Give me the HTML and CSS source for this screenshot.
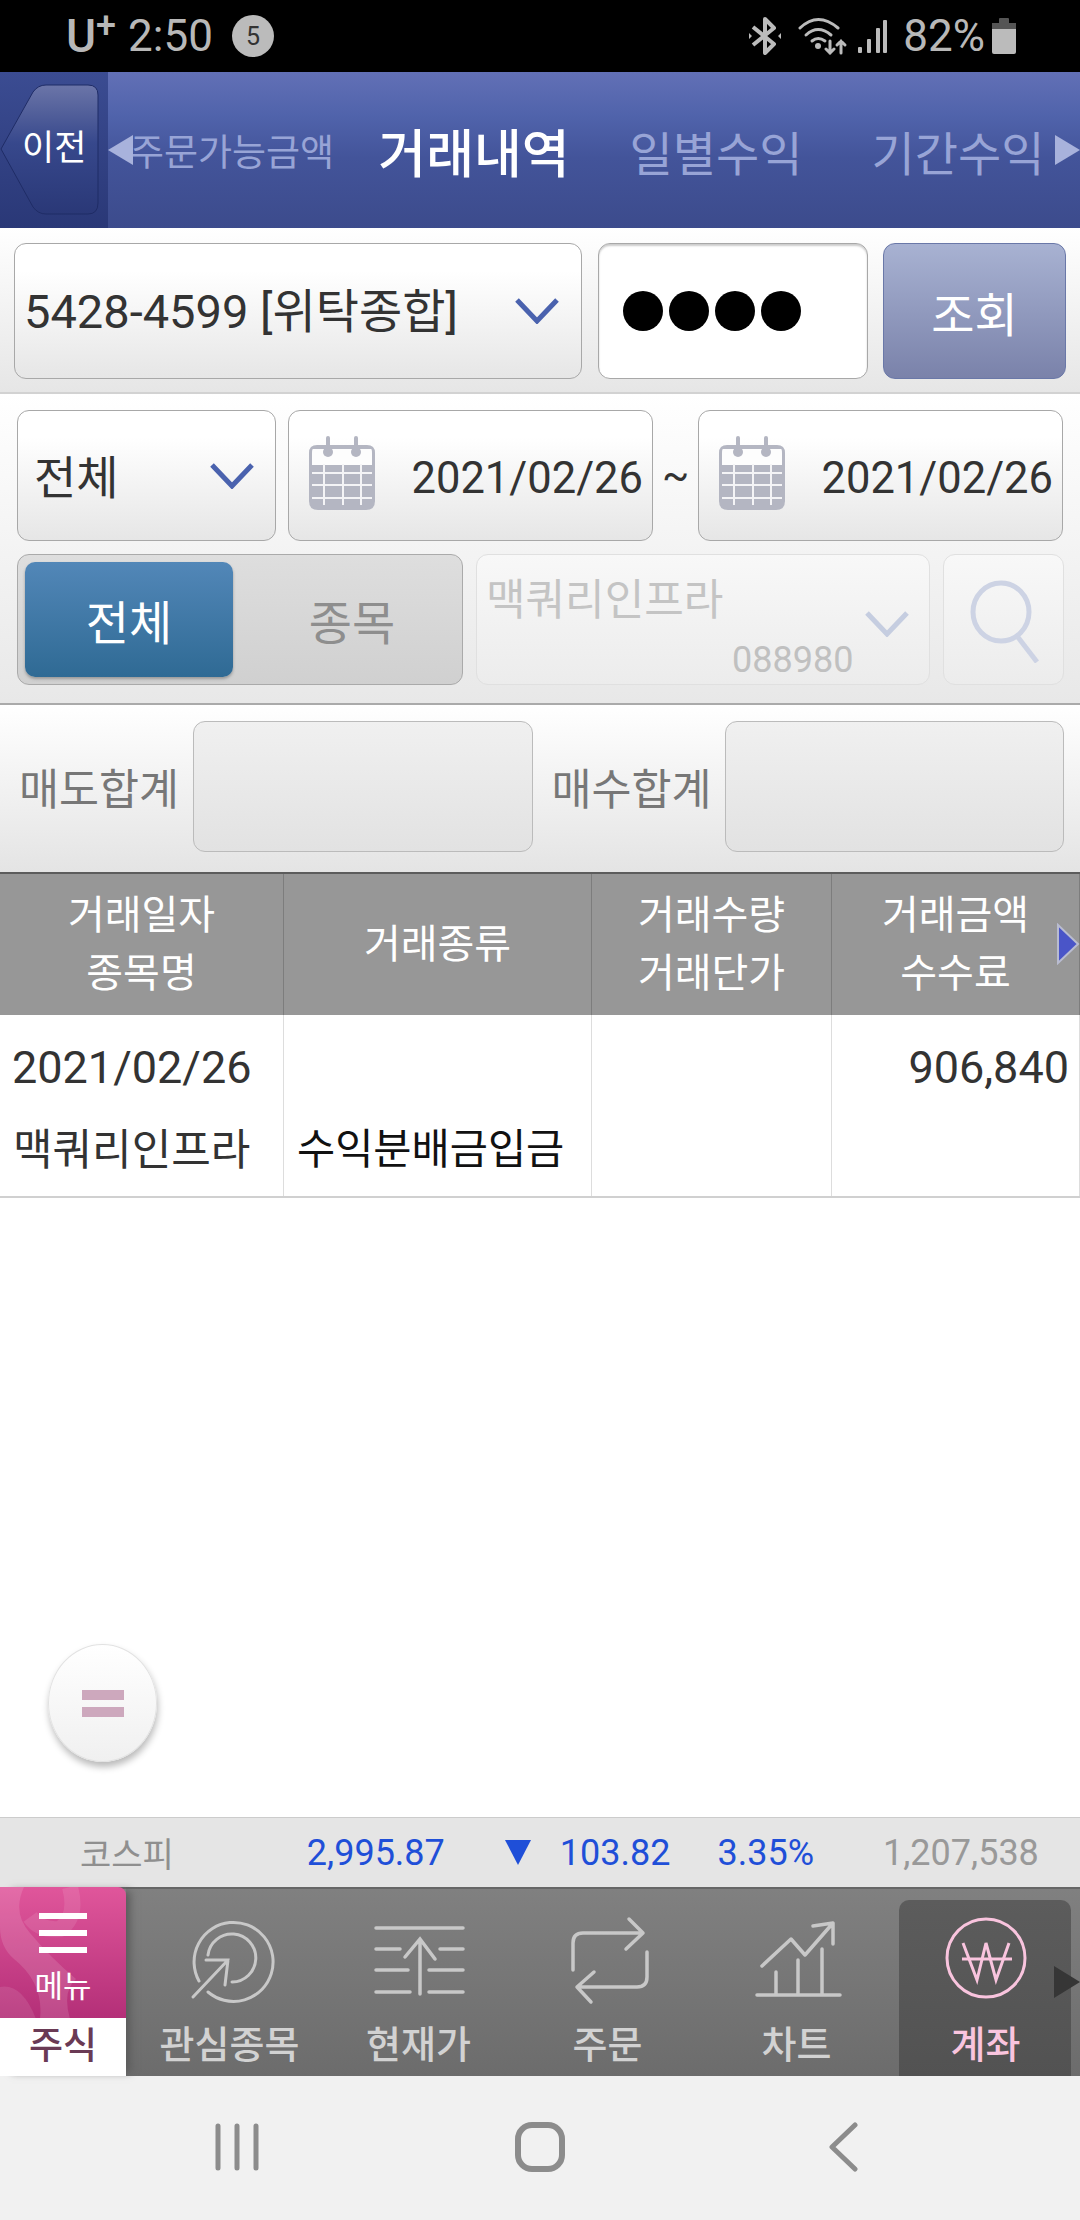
FILE: index.html
```html
<!DOCTYPE html>
<html lang="ko">
  <head>
    <meta charset="UTF-8" />
    <meta name="viewport" content="width=device-width, initial-scale=1.0" />
    <title>거래내역</title>
    <link rel="stylesheet" href="styles.css">
  </head>
  <body>
    <!-- status bar -->
    <div id="statusBar">
      <div class="statusLeft">
        <span class="carrier">U<sup>+</sup></span>
        <span class="clock">2:50</span>
        <span class="badge">5</span>
      </div>
      <div class="statusRight">
        <svg class="btIcon" width="34" height="38" viewBox="0 0 34 38"><path d="M5 10 L26 27 L17 36 V2 L26 11 L5 28" fill="none" stroke="#bbb" stroke-width="4" stroke-linejoin="round"/><path d="M1 16 L4 19 L1 22 Z M33 16 L30 19 L33 22 Z" fill="#bbb"/></svg>
        <svg class="wifiIcon" width="50" height="38" viewBox="0 0 50 38"><g fill="none" stroke="#bbb" stroke-width="3" stroke-linecap="round"><path d="M2 11 Q20 -6 40 11"/><path d="M8 18 Q20 7 33 18"/><path d="M14 24 Q20 19 27 24"/><path d="M32 24 V36 M28 32 L32 36 L36 32"/><path d="M43 36 V24 M39 28 L43 24 L47 28"/></g><circle cx="20" cy="29" r="3" fill="#bbb"/></svg>
        <svg class="signalIcon" width="32" height="36" viewBox="0 0 32 36"><g fill="#bbb"><rect x="1" y="29" width="4" height="6" rx="1"/><rect x="10" y="21" width="4" height="14" rx="1"/><rect x="19" y="10" width="4" height="25" rx="1"/><rect x="26" y="2" width="4" height="33" rx="1"/></g></svg>
        <span class="battText">82%</span>
        <div class="battery"><div class="battCap"></div><div class="battTop"></div><div class="battBody"></div></div>
      </div>
    </div>

    <!-- top tabs -->
    <div id="topHeader">
      <div class="backArea">
        <svg width="108" height="156" viewBox="0 0 108 156">
          <defs>
            <linearGradient id="backFill" x1="0" y1="0" x2="0" y2="1">
              <stop offset="0" stop-color="#6b75a8"/>
              <stop offset="0.45" stop-color="#37488c"/>
              <stop offset="1" stop-color="#2a3877"/>
            </linearGradient>
          </defs>
          <path d="M1 77 L33 20 Q38 13 46 13 H88 Q98 13 98 23 V131 Q98 142 88 142 H46 Q38 142 33 135 Z" fill="url(#backFill)" stroke="#1f2c66" stroke-width="1"/>
        </svg>
        <span class="backLabel">이전</span>
      </div>
      <div class="tabs">
        <div class="tab small">주문가능금액</div>
        <div class="tab active">거래내역</div>
        <div class="tab">일별수익</div>
        <div class="tab">기간수익</div>
        <div class="tabArrow left"></div>
        <div class="tabArrow right"></div>
      </div>
    </div>

    <!-- account -->
    <div id="accountRow">
      <div class="field accountSelect">
        <span class="accountText">5428-4599 [위탁종합]</span>
        <svg class="chevron" width="44" height="26" viewBox="0 0 44 26"><path d="M2 2 L22 23 L42 2" fill="none" stroke="#4a62ae" stroke-width="5"/></svg>
      </div>
      <div class="passwordBox"><i></i><i></i><i></i><i></i></div>
      <button class="queryBtn">조회</button>
    </div>

    <!-- filters -->
    <div id="filterPanel">
      <div class="filterRow">
        <div class="field typeSelect">
          <span>전체</span>
          <svg class="chevron" width="44" height="26" viewBox="0 0 44 26"><path d="M2 2 L22 23 L42 2" fill="none" stroke="#4a62ae" stroke-width="5"/></svg>
        </div>
        <div class="field dateField">
          <svg class="calendar" width="68" height="76" viewBox="0 0 68 76">
            <path d="M9 10 H59 Q67 10 67 18 V66 Q67 75 58 75 H10 Q1 75 1 66 V18 Q1 10 9 10 Z" fill="#b4b6c2"/>
            <path d="M5 14 H63 Q64 14 64 18 V30 H4 V18 Q4 14 5 14 Z" fill="#fdfdfd"/>
            <g fill="#b4b6c2"><circle cx="20" cy="17" r="5"/><circle cx="48" cy="17" r="5"/><rect x="18" y="1" width="4" height="16" rx="2"/><rect x="46" y="1" width="4" height="16" rx="2"/></g>
            <g stroke="#f4f4f6" stroke-width="2"><path d="M4 38 H64 M4 50 H64 M4 63 H64 M16 29 V70 M35 29 V70 M53 29 V70"/></g>
          </svg>
          <span class="dateText">2021/02/26</span>
        </div>
        <div class="tilde">~</div>
        <div class="field dateField">
          <svg class="calendar" width="68" height="76" viewBox="0 0 68 76">
            <path d="M9 10 H59 Q67 10 67 18 V66 Q67 75 58 75 H10 Q1 75 1 66 V18 Q1 10 9 10 Z" fill="#b4b6c2"/>
            <path d="M5 14 H63 Q64 14 64 18 V30 H4 V18 Q4 14 5 14 Z" fill="#fdfdfd"/>
            <g fill="#b4b6c2"><circle cx="20" cy="17" r="5"/><circle cx="48" cy="17" r="5"/><rect x="18" y="1" width="4" height="16" rx="2"/><rect x="46" y="1" width="4" height="16" rx="2"/></g>
            <g stroke="#f4f4f6" stroke-width="2"><path d="M4 38 H64 M4 50 H64 M4 63 H64 M16 29 V70 M35 29 V70 M53 29 V70"/></g>
          </svg>
          <span class="dateText">2021/02/26</span>
        </div>
      </div>
      <div class="filterRow">
        <div class="toggle">
          <div class="toggleOn">전체</div>
          <div class="toggleOff">종목</div>
        </div>
        <div class="stockInput">
          <span class="stockName">맥쿼리인프라</span>
          <span class="stockCode">088980</span>
          <svg class="stockChevron" width="44" height="26" viewBox="0 0 44 26"><path d="M2 2 L22 23 L42 2" fill="none" stroke="#c5cde0" stroke-width="5"/></svg>
        </div>
        <div class="searchBtn">
          <svg width="70" height="84" viewBox="0 0 70 84"><ellipse cx="32" cy="33" rx="28" ry="29" fill="none" stroke="#cdd3e4" stroke-width="5"/><path d="M48 57 L68 83" stroke="#cdd3e4" stroke-width="5"/></svg>
        </div>
      </div>
    </div>

    <!-- totals -->
    <div id="sumRow">
      <span class="sumLabel">매도합계</span>
      <div class="sumBox"></div>
      <span class="sumLabel second">매수합계</span>
      <div class="sumBox"></div>
    </div>

    <!-- table -->
    <div id="tableHead" class="gridCols">
      <div class="headCell">거래일자<br>종목명</div>
      <div class="headCell">거래종류</div>
      <div class="headCell">거래수량<br>거래단가</div>
      <div class="headCell">거래금액<br>수수료</div>
      <svg class="headArrow" width="24" height="42" viewBox="0 0 24 42"><path d="M2 2 L22 21 L2 40 Z" fill="#4a55c8" stroke="#b9bcd0" stroke-width="2"/></svg>
    </div>
    <div id="tableRow" class="gridCols">
      <div class="bodyCell"><div class="line num">2021/02/26</div><div class="line name">맥쿼리인프라</div></div>
      <div class="bodyCell"><div class="line"></div><div class="line kind">수익분배금입금</div></div>
      <div class="bodyCell"></div>
      <div class="bodyCell"><div class="line num right">906,840</div></div>
    </div>

    <div id="emptyArea">
      <div class="fab"><i></i><i></i></div>
    </div>

    <!-- index ticker -->
    <div id="ticker">
      <span class="tkName">코스피</span>
      <span class="tkIndex">2,995.87</span>
      <svg class="tkDown" width="28" height="27" viewBox="0 0 28 27"><path d="M1 1 H27 L14 26 Z" fill="#1f4fd8"/></svg>
      <span class="tkDiff">103.82</span>
      <span class="tkPct">3.35%</span>
      <span class="tkVol">1,207,538</span>
    </div>

    <!-- app menu -->
    <div id="bottomMenu">
      <div class="menuTile">
        <div class="menuPink">
          <svg class="swirl" width="126" height="132" viewBox="0 0 126 132"><path d="M0 0 H24 Q12 26 30 46 Q50 70 76 92 Q62 104 70 132 H40 Q44 96 14 72 Q0 60 0 40 Z" fill="#fff" opacity="0.13"/><path d="M0 100 Q22 96 36 132 H0 Z" fill="#fff" opacity="0.1"/><path d="M70 0 Q78 30 60 42 Q40 44 30 30" fill="none" stroke="#fff" stroke-width="16" opacity="0.1"/></svg>
          <div class="burger"><i></i><i></i><i></i></div>
          <span class="menuText">메뉴</span>
        </div>
        <div class="menuWhite">주식</div>
      </div>
      <div class="navItem">
        <svg width="120" height="100" viewBox="0 0 120 100"><g fill="none" stroke="#c8c8c8" stroke-width="3" stroke-linecap="round"><path d="M38 82 A39.5 39.5 0 1 0 29 71"/><path d="M62 72 A24 24 0 1 0 38 45"/><path d="M23 87 L58 50 M36 50 H58 L55 75"/></g></svg>
        <span>관심종목</span>
      </div>
      <div class="navItem">
        <svg width="120" height="100" viewBox="0 0 120 100"><g fill="none" stroke="#c8c8c8" stroke-width="3.5" stroke-linecap="round"><path d="M17 18 H104 M17 39 H41 M81 39 H104 M17 60 H49 M70 60 H104 M17 82 H51 M70 82 H104"/><path d="M61 84 V29 M46 47 L61 29 L76 49"/></g></svg>
        <span>현재가</span>
      </div>
      <div class="navItem">
        <svg width="120" height="100" viewBox="0 0 120 100"><g fill="none" stroke="#c8c8c8" stroke-width="3.5" stroke-linecap="round" stroke-linejoin="round"><path d="M25 60 V33 Q25 23 35 23 H95 M81 9 L95 23 L78 39"/><path d="M99 42 V67 Q99 77 89 77 H29 M46 62 L29 77 L43 92"/></g></svg>
        <span>주문</span>
      </div>
      <div class="navItem">
        <svg width="120" height="100" viewBox="0 0 120 100"><g fill="none" stroke="#c8c8c8" stroke-width="3.5" stroke-linecap="round" stroke-linejoin="round"><path d="M20 85 H103 M39 85 V62 M61 85 V50 M85 85 V39"/><path d="M25 56 L54 29 L68 45 L96 13 M76 16 L96 13 V34"/></g></svg>
        <span>차트</span>
      </div>
      <div class="navItem current">
        <svg width="120" height="100" viewBox="0 0 120 100"><circle cx="60" cy="48" r="39" fill="none" stroke="#f9c4de" stroke-width="3"/><g fill="none" stroke="#f9c4de" stroke-width="3"><path d="M37 33 L51 70 L60 33 L70 70 L83 33"/><path d="M36 49 H86"/></g></svg>
        <span>계좌</span>
      </div>
      <svg class="menuArrow" width="26" height="32" viewBox="0 0 26 32"><path d="M0 0 L26 16 L0 32 Z" fill="#363636"/></svg>
    </div>

    <!-- android keys -->
    <div id="softKeys">
      <div class="softKey">
        <svg width="46" height="48" viewBox="0 0 46 48"><path d="M4 3 V45 M23 3 V45 M42 3 V45" stroke="#8c8c8c" stroke-width="5" stroke-linecap="round"/></svg>
      </div>
      <div class="softKey">
        <svg width="50" height="50" viewBox="0 0 50 50"><rect x="3" y="3" width="44" height="44" rx="14" fill="none" stroke="#8c8c8c" stroke-width="6"/></svg>
      </div>
      <div class="softKey">
        <svg width="30" height="50" viewBox="0 0 30 50"><path d="M27 3 L4 25 L27 47" fill="none" stroke="#8c8c8c" stroke-width="5" stroke-linecap="round" stroke-linejoin="round"/></svg>
      </div>
    </div>
  </body>
</html>
```

FILE: styles.css
```css
* {
  box-sizing: border-box;
}

body {
  margin: 0;
  width: 1080px;
  height: 2220px;
  display: flex;
  flex-direction: column;
  background: #fff;
  font-family: Roboto, "Noto Sans CJK KR", sans-serif;
  overflow: hidden;
}

#statusBar {
  height: 72px;
  background: #000;
  color: #b8b8b8;
  display: flex;
  justify-content: space-between;
  align-items: center;
  padding: 0 64px 0 66px;
  flex: none;
}

.statusLeft,
.statusRight {
  display: flex;
  align-items: center;
}

.carrier {
  font-size: 46px;
  font-weight: 500;
  line-height: 1;
  position: relative;
}

.carrier sup {
  font-size: 36px;
  vertical-align: 14px;
  line-height: 0;
}

.clock {
  font-size: 44px;
  margin-left: 12px;
}

.badge {
  width: 42px;
  height: 42px;
  margin-left: 19px;
  border-radius: 50%;
  background: #bbb;
  color: #333;
  font-size: 25px;
  display: flex;
  align-items: center;
  justify-content: center;
}

.btIcon {
  margin-right: 16px;
}

.wifiIcon {
  margin-right: 9px;
}

.signalIcon {
  margin-right: 14px;
}

.battText {
  font-size: 44px;
  margin-right: 7px;
}

.battery {
  width: 24px;
  height: 36px;
  display: flex;
  flex-direction: column;
  align-items: center;
}

.battCap {
  width: 10px;
  height: 5px;
  background: #555;
  border-radius: 1px 1px 0 0;
}

.battTop {
  width: 24px;
  height: 6px;
  background: #555;
}

.battBody {
  width: 24px;
  flex: 1;
  background: #bbb;
  border-radius: 0 0 2px 2px;
}

#topHeader {
  height: 156px;
  flex: none;
  display: flex;
  background: linear-gradient(#6270b6 0%, #5063ab 28%, #43549a 55%, #3c4b8c 100%);
}

.backArea {
  width: 108px;
  position: relative;
  background: linear-gradient(#3b4c92, #2a3877);
}

.backArea svg {
  display: block;
}

.backLabel {
  position: absolute;
  left: 22px;
  top: 54px;
  color: #fff;
  font-size: 35px;
  line-height: 46px;
}

.tabs {
  flex: 1;
  position: relative;
  display: grid;
  grid-template-columns: repeat(4, 242px);
  padding-left: 3px;
  align-items: center;
}

.tab {
  text-align: center;
  font-size: 47px;
  color: #98a4d6;
  white-space: nowrap;
}

.tab.small {
  font-size: 37px;
}

.tab.active {
  color: #fff;
  font-weight: 500;
  font-size: 52px;
}

.tabArrow {
  position: absolute;
  top: 63px;
  width: 0;
  height: 0;
  border-top: 15px solid transparent;
  border-bottom: 15px solid transparent;
}

.tabArrow.left {
  left: 0;
  border-right: 25px solid #a8b2dc;
}

.tabArrow.right {
  right: 0;
  border-left: 25px solid #a8b2dc;
}

#accountRow {
  height: 166px;
  flex: none;
  display: flex;
  padding: 15px 14px 0;
  gap: 16px;
  background: linear-gradient(#fff, #e6e6e6);
  border-bottom: 2px solid #d2d2d2;
}

.field {
  height: 136px;
  display: flex;
  align-items: center;
  background: linear-gradient(#fff 20%, #e6e6e6);
  border: 1px solid #a8a8a8;
  border-radius: 12px;
  color: #333;
}

.accountSelect {
  width: 568px;
  padding: 0 22px 0 9px;
  justify-content: space-between;
  font-size: 47px;
  white-space: nowrap;
}

.accountText {
  padding-bottom: 8px;
}

.accountSelect .chevron {
  flex: none;
}

.passwordBox {
  width: 270px;
  height: 136px;
  display: flex;
  align-items: center;
  gap: 6px;
  padding-left: 24px;
  background: #fff;
  border: 1px solid #a8a8a8;
  border-radius: 12px;
  box-shadow: inset 0 2px 2px #ccc;
}

.passwordBox i {
  width: 40px;
  height: 40px;
  border-radius: 50%;
  background: #000;
}

.queryBtn {
  width: 183px;
  height: 136px;
  padding: 0;
  margin-left: -1px;
  background: linear-gradient(#a8b2d2, #7a82aa);
  border: 1px solid #6a78a8;
  border-radius: 12px;
  color: #fff;
  font-family: inherit;
  font-size: 47px;
}

#filterPanel {
  height: 311px;
  flex: none;
  padding: 16px 16px 0 17px;
  display: flex;
  flex-direction: column;
  gap: 13px;
  background: linear-gradient(#fff, #e8e8e8);
  border-bottom: 2px solid #aaa;
}

.filterRow {
  display: flex;
  height: 131px;
}

.filterRow .field {
  height: 131px;
}

.typeSelect {
  width: 259px;
  margin-right: 12px;
  padding: 0 21px 0 16px;
  justify-content: space-between;
  font-size: 46px;
}

.typeSelect span {
  padding-bottom: 3px;
}

.dateField {
  width: 365px;
  padding: 0 9px 0 19px;
  justify-content: space-between;
}

.calendar {
  margin-bottom: 6px;
  flex: none;
}

.dateText {
  font-size: 43.5px;
  padding-top: 5px;
}

.tilde {
  width: 45px;
  text-align: center;
  font-size: 40px;
  line-height: 131px;
  color: #333;
}

.toggle {
  width: 446px;
  margin-right: 13px;
  padding: 7px;
  display: flex;
  background: linear-gradient(#dedede, #d0d0d0);
  border: 1px solid #aaa;
  border-radius: 12px;
}

.toggleOn {
  width: 208px;
  display: flex;
  align-items: center;
  justify-content: center;
  background: linear-gradient(#5287b8, #2f6a94);
  border-radius: 10px;
  box-shadow: 0 2px 3px #999;
  color: #fff;
  font-size: 47px;
}

.toggleOff {
  flex: 1;
  display: flex;
  align-items: center;
  justify-content: center;
  padding-left: 16px;
  color: #8e8e8e;
  font-size: 47px;
}

.stockInput {
  width: 454px;
  position: relative;
  background: linear-gradient(#f8f8f8, #ececec);
  border: 1px solid #e0e0e0;
  border-radius: 12px;
}

.stockName {
  position: absolute;
  left: 9px;
  top: 10px;
  font-size: 43px;
  color: #c4c4c4;
  white-space: nowrap;
}

.stockCode {
  position: absolute;
  left: 255px;
  top: 84px;
  font-size: 36px;
  color: #c0c0c0;
}

.stockChevron {
  position: absolute;
  left: 388px;
  top: 56px;
}

.searchBtn {
  width: 121px;
  margin-left: 13px;
  display: flex;
  justify-content: center;
  padding-top: 24px;
  background: linear-gradient(#f8f8f8, #ececec);
  border: 1px solid #e0e0e0;
  border-radius: 12px;
}

#sumRow {
  height: 167px;
  flex: none;
  display: flex;
  align-items: center;
  padding: 0 16px 5px 19px;
  background: linear-gradient(#fff, #e4e4e4);
}

.sumLabel {
  width: 158px;
  margin-right: 16px;
  font-size: 43.5px;
  color: #777;
  white-space: nowrap;
}

.sumLabel.second {
  width: 157px;
  margin-left: 19px;
}

.sumBox {
  flex: 1;
  height: 131px;
  background: linear-gradient(#f0f0f0, #e2e2e2);
  border: 1px solid #bbb;
  border-radius: 12px;
}

.gridCols {
  display: grid;
  grid-template-columns: 284px 308px 240px 248px;
  flex: none;
}

#tableHead {
  height: 143px;
  position: relative;
  background: #979797;
  border-top: 2px solid #5c5c5c;
}

.headCell {
  display: flex;
  align-items: center;
  justify-content: center;
  text-align: center;
  color: #fff;
  font-size: 40px;
  line-height: 58px;
  border-right: 1px solid #7d7d7d;
}

.headArrow {
  position: absolute;
  right: 0;
  top: 49px;
}

#tableRow {
  height: 183px;
  border-bottom: 2px solid #d0d0d0;
}

.bodyCell {
  border-right: 1px solid #ddd;
  padding-top: 13px;
}

.line {
  height: 80px;
  line-height: 80px;
  white-space: nowrap;
  color: #333;
}

.num {
  font-size: 45px;
  padding-left: 12px;
}

.num.right {
  text-align: right;
  padding: 0 10px 0 0;
}

.name {
  font-size: 43px;
  padding-left: 13px;
  padding-top: 2px;
}

.kind {
  font-size: 41.5px;
  padding-left: 13px;
  padding-top: 2px;
  color: #111;
}

#emptyArea {
  flex: 1;
  position: relative;
}

.fab {
  position: absolute;
  left: 48px;
  top: 446px;
  width: 109px;
  height: 118px;
  border-radius: 50%;
  background: linear-gradient(#fff, #f0f0f0);
  border: 1px solid #e2e2e2;
  box-shadow: 1px 5px 7px #bbb;
  display: flex;
  flex-direction: column;
  align-items: center;
  justify-content: center;
  gap: 7px;
}

.fab i {
  width: 42px;
  height: 10px;
  background: #cda8bd;
}

#ticker {
  height: 70px;
  flex: none;
  display: flex;
  align-items: center;
  background: #e5e5e5;
  border-top: 1px solid #ccc;
  font-size: 36px;
  white-space: nowrap;
}

.tkName {
  margin-left: 80px;
  font-size: 34px;
  color: #8f8f8f;
}

.tkIndex {
  margin-left: 133px;
  color: #1f4fd8;
}

.tkDown {
  margin-left: 59px;
}

.tkDiff {
  margin-left: 28px;
  color: #1f4fd8;
}

.tkPct {
  margin-left: 47px;
  color: #1f4fd8;
}

.tkVol {
  margin-left: 69px;
  color: #999;
}

#bottomMenu {
  height: 189px;
  flex: none;
  position: relative;
  display: flex;
  padding-left: 9px;
  background: linear-gradient(#808080, #6c6c6c);
  border-top: 2px solid #666;
}

.menuTile {
  position: absolute;
  left: 0;
  top: -2px;
  width: 126px;
  height: 189px;
  display: flex;
  flex-direction: column;
  box-shadow: 8px 0 8px -4px #5a5a5a;
}

.menuPink {
  height: 132px;
  position: relative;
  background: linear-gradient(#e0569b, #b42f78);
  border-radius: 0 8px 0 0;
  display: flex;
  flex-direction: column;
  align-items: center;
  overflow: hidden;
}

.swirl {
  position: absolute;
  left: 0;
  top: 0;
}

.burger {
  position: relative;
  width: 48px;
  margin-top: 26px;
  display: flex;
  flex-direction: column;
  gap: 11px;
}

.burger i {
  height: 6px;
  background: #fff;
}

.menuText {
  position: relative;
  margin-top: 15px;
  font-size: 31px;
  line-height: 38px;
  color: #fff;
}

.menuWhite {
  flex: 1;
  background: #fff;
  color: #6a3a55;
  font-size: 37px;
  font-weight: 500;
  text-align: center;
  line-height: 58px;
}

.navItem {
  position: relative;
  left: 126px;
  width: 189px;
  padding-top: 21px;
  display: flex;
  flex-direction: column;
  align-items: center;
  color: #d2d2d2;
  font-size: 38px;
  font-weight: 500;
  line-height: 50px;
}

.navItem svg {
  display: block;
  margin-bottom: 10px;
}

.navItem.current {
  color: #f9c4de;
}

.navItem.current::before {
  content: "";
  position: absolute;
  left: 8px;
  right: 9px;
  top: 11px;
  bottom: 0;
  background: linear-gradient(#5c5c5c, #525252);
  border-radius: 10px 10px 0 0;
}

.navItem.current svg,
.navItem.current span {
  position: relative;
}

.menuArrow {
  position: absolute;
  right: 0;
  top: 77px;
}

#softKeys {
  height: 144px;
  flex: none;
  display: flex;
  justify-content: center;
  align-items: center;
  background: #f1f1f1;
  padding-bottom: 2px;
}

.softKey {
  width: 303px;
  display: flex;
  justify-content: center;
}
```
